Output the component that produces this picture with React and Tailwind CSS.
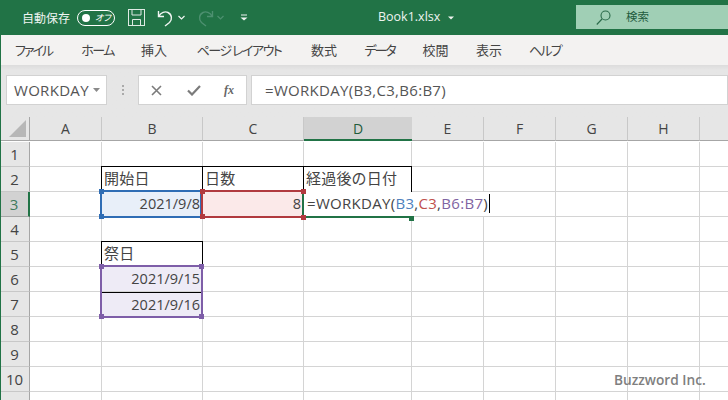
import React from "react";

const JP = "font-['Noto_Sans_CJK_JP','Noto_Sans',sans-serif]";
const LATIN = "font-['Open_Sans',sans-serif]";
const colWidths = [72, 101, 101, 108, 72, 72, 72, 72, 29];
const colNames = ["A", "B", "C", "D", "E", "F", "G", "H", ""];
const rows = [1, 2, 3, 4, 5, 6, 7, 8, 9, 10, 11];
const tabs = [
  { label: "ファイル", width: "w-[63px] tracking-[-2px]" },
  { label: "ホーム", width: "w-[65px] tracking-[-1.500px]" },
  { label: "挿入", width: "w-[48px]" },
  { label: "ページ レイアウト", width: "w-[122px] tracking-[-1.500px]" },
  { label: "数式", width: "w-[48px]" },
  { label: "データ", width: "w-[63px] tracking-[-2px]" },
  { label: "校閲", width: "w-[49px]" },
  { label: "表示", width: "w-[58px]" },
  { label: "ヘルプ", width: "w-[54px] tracking-[-1.700px]" },
];

const cells = {
  "2-1": { text: "開始日", box: true },
  "2-2": { text: "日数", box: true },
  "2-3": { text: "経過後の日付", box: true },
  "3-1": { text: "2021/9/8", right: true, bg: "bg-[#e8eff9]" },
  "3-2": { text: "8", right: true, bg: "bg-[#fbe9e9]" },
  "5-1": { text: "祭日", box: true },
  "6-1": { text: "2021/9/15", right: true, bg: "bg-[#eeebf6]" },
  "7-1": { text: "2021/9/16", right: true, bg: "bg-[#eeebf6]", top: true },
};

const Handle = ({ className }) => <div className={`absolute w-[5px] h-[5px] ${className}`} />;

const TitleBar = () => (
  <div className="h-[35px] bg-[#217346] flex items-center text-white shrink-0 whitespace-nowrap">
    <span className={`${JP} ml-[22px] w-[48px] shrink-0 text-[12px] text-[#f0f5f2]`}>自動保存</span>
    <div className="ml-[7px] w-[38px] h-[16px] shrink-0 rounded-full border border-white flex items-center">
      <div className="ml-[4px] w-[8px] h-[8px] rounded-full bg-white" />
      <span className={`${JP} ml-[5px] text-[9px] italic [font-feature-settings:'palt']`}>オフ</span>
    </div>
    <svg className="ml-[13px] shrink-0" width="17" height="17" viewBox="0 0 17 17" fill="none" stroke="#dfeae4" strokeWidth="1">
      <rect x="0.5" y="0.5" width="16" height="16" />
      <path d="M4 .5V6H13V.5M4.500 16.500V10.500H12.500V16.500" />
    </svg>
    <svg className="ml-[12px] shrink-0" width="18" height="18" viewBox="0 0 18 18" fill="none" stroke="#f0f5f2" strokeWidth="1.4">
      <path d="M1.500 2V7.500H7M2 7C4 3.500 8 2 11 3.500 15 5.500 15.500 10.500 12.500 13.500L8 17" />
    </svg>
    <svg className="ml-[3px] shrink-0" width="7" height="5" viewBox="0 0 7 5" fill="none" stroke="#f0f5f2" strokeWidth="1.2">
      <path d="M.5 1 3.500 4 6.500 1" />
    </svg>
    <svg className="ml-[11px] shrink-0" width="18" height="18" viewBox="0 0 18 18" fill="none" stroke="#4d9070" strokeWidth="1.4">
      <path d="M16.500 2V7.500H11M16 7C14 3.500 10 2 7 3.500 3 5.500 2.500 10.500 5.500 13.500L10 17" />
    </svg>
    <svg className="ml-[3px] shrink-0" width="7" height="5" viewBox="0 0 7 5" fill="none" stroke="#4d9070" strokeWidth="1.2">
      <path d="M.5 1 3.500 4 6.500 1" />
    </svg>
    <svg className="ml-[16px] shrink-0" width="8" height="7" viewBox="0 0 8 7" fill="none" stroke="#f0f5f2">
      <path d="M1 1H7" />
      <path d="M.5 3.500 4 6.500 7.500 3.500Z" fill="#f0f5f2" stroke="none" />
    </svg>
    <span className={`ml-[130px] w-[64px] shrink-0 ${LATIN} text-[12.500px] text-[#eef4f0]`}>Book1.xlsx</span>
    <svg className="ml-[6px] shrink-0" width="6" height="4" viewBox="0 0 6 4" fill="#eef4f0"><path d="M0 .5H6L3 3.500Z" /></svg>
    <div className="ml-[122px] w-[152px] h-[24px] -mt-[1px] shrink-0 bg-[#a0cfb5] flex items-center">
      <svg className="ml-[20px]" width="15" height="15" viewBox="0 0 15 15" fill="none" stroke="#2a6a4a" strokeWidth="1.1">
        <circle cx="9.500" cy="5.500" r="4.500" />
        <path d="M6 9 .8 14.500" />
      </svg>
      <span className={`${JP} ml-[15px] text-[11.500px] text-[#235c3f]`}>検索</span>
    </div>
  </div>
);

const RibbonTabs = () => (
  <div className="h-[30px] bg-[#f3f2f1] flex items-center pl-[2px] pb-[1px] shrink-0">
    {tabs.map((t) => (
      <div key={t.label} className={`${t.width} ${JP} shrink-0 text-center text-[13px] [font-feature-settings:'palt'] text-[#444] whitespace-nowrap`}>
        {t.label}
      </div>
    ))}
  </div>
);

const FormulaBar = () => (
  <div className="h-[52px] flex items-start pt-[10px] pl-[6px] shrink-0 bg-gradient-to-b from-[#dcdcdc] to-[#e6e6e6] to-[5px]">
    <div className="w-[101px] h-[30px] bg-white border border-[#d2d2d2] flex items-center pl-[7px] pr-[6px] justify-between">
      <span className={`${LATIN} text-[15px] tracking-[0.3px] text-[#555]`}>WORKDAY</span>
      <svg width="7" height="4" viewBox="0 0 7 4" fill="#8a8a8a"><path d="M0 0H7L3.500 4Z" /></svg>
    </div>
    <div className="w-[31px] h-[30px] flex flex-col items-center justify-center gap-[2px]">
      <div className="w-[2px] h-[2px] bg-[#aaa]" />
      <div className="w-[2px] h-[2px] bg-[#aaa]" />
      <div className="w-[2px] h-[2px] bg-[#aaa]" />
    </div>
    <div className="w-[109px] h-[30px] bg-white border border-[#d2d2d2] flex items-center">
      <svg className="ml-[12px]" width="11" height="11" viewBox="0 0 11 11" fill="none" stroke="#7b7b7b" strokeWidth="1.600">
        <path d="M1 1 10 10M10 1 1 10" />
      </svg>
      <svg className="ml-[25px]" width="14" height="11" viewBox="0 0 14 11" fill="none" stroke="#7b7b7b" strokeWidth="2.200">
        <path d="M1 5.500 5 9.500 13 1" />
      </svg>
      <span className="ml-[23px] font-['Liberation_Serif',serif] italic font-bold text-[12px] text-[#666]">fx</span>
    </div>
    <div className="ml-[4px] flex-1 h-[30px] bg-white border border-[#d2d2d2] flex items-center pl-[13px]">
      <span className={`${LATIN} text-[15px] tracking-[0.3px] text-[#555]`}>=WORKDAY(B3,C3,B6:B7)</span>
    </div>
  </div>
);

const Grid = () => (
  <div className="relative flex-1 overflow-hidden bg-white">
    <div className="grid grid-cols-[30px_72px_101px_101px_108px_72px_72px_72px_72px_29px] auto-rows-[25px]">
      <div className="h-[24px] bg-[#e6e6e6] border-b border-r border-[#a6a6a6] relative flex items-end justify-end">
        <div className="w-0 h-0 mr-[3px] mb-[3px] border-l-[17px] border-l-transparent border-b-[17px] border-b-[#b7b7b7]" />
      </div>
      {colNames.map((name, i) => (
        <div
          key={i}
          className={`h-[24px] ${LATIN} text-[14px] flex items-center justify-center ${
            name === "D"
              ? "bg-[#d2d2d2] border-b-2 border-[#217346] text-[#1f5c3c]"
              : "bg-[#e6e6e6] border-b border-r border-b-[#a6a6a6] border-r-[#c8c8c8] text-[#444]"
          }`}
        >
          {name}
        </div>
      ))}
      {rows.map((r) => (
        <React.Fragment key={r}>
          <div
            className={`${LATIN} text-[15px] flex items-center justify-center border-b ${
              r === 3
                ? "bg-[#d2d2d2] border-r-2 border-r-[#217346] border-b-[#a6a6a6] text-[#3f7a5c]"
                : "bg-[#e6e6e6] border-r border-r-[#a6a6a6] border-b-[#c8c8c8] text-[#444]"
            }`}
          >
            {r}
          </div>
          {colWidths.map((_, c) => {
            const cell = cells[`${r}-${c}`];
            if (!cell) return <div key={c} className="border-r border-b border-[#d4d4d4]" />;
            return (
              <div
                key={c}
                className={`flex items-center text-[#444] whitespace-nowrap ${
                  cell.right ? `justify-end pr-[2px] text-[14.500px] ${LATIN}` : `pl-[2px] pb-[3px] text-[15px] tracking-[0.2px] ${JP}`
                } ${cell.bg || ""} ${
                  cell.box ? "border border-black -mt-px -ml-px -mb-px" : "border-r border-b border-[#d4d4d4]"
                } ${cell.top ? "border-t border-t-black" : ""}`}
              >
                {cell.text}
              </div>
            );
          })}
        </React.Fragment>
      ))}
    </div>

    {/* range highlights drawn over the sheet */}
    <div className="absolute left-[100px] top-[73px] w-[102px] h-[28px] border-[2px] border-[#2f6db5]">
      <Handle className="-left-[3px] -top-[3px] bg-[#2f6db5]" />
      <Handle className="-left-[3px] -bottom-[3px] bg-[#2f6db5]" />
    </div>
    <div className="absolute left-[304px] top-[75px] h-[24px] bg-white flex items-center pl-[3px] pb-[2px] text-[15px] tracking-[0.3px] whitespace-nowrap text-[#444]">
      <span className={LATIN}>=WORKDAY(</span>
      <span className={`${LATIN} text-[#4f81bd]`}>B3</span>
      <span className={LATIN}>,</span>
      <span className={`${LATIN} text-[#c0504d]`}>C3</span>
      <span className={LATIN}>,</span>
      <span className={`${LATIN} text-[#8064a2]`}>B6:B7</span>
      <span className={LATIN}>)</span>
      <span className="ml-[1px] w-px h-[19px] bg-black" />
    </div>
    <div className="absolute left-[201px] top-[73px] w-[103px] h-[28px] border-[2px] border-[#b13a3f]">
      <Handle className="-left-[3px] -top-[3px] bg-[#b13a3f]" />
      <Handle className="-left-[3px] -bottom-[3px] bg-[#b13a3f]" />
    </div>
    <div className="absolute left-[100px] top-[148px] w-[103px] h-[53px] border-[2px] border-[#7e5ea8]">
      <Handle className="-left-[3px] -top-[3px] bg-[#7e5ea8]" />
      <Handle className="-right-[3px] -top-[3px] bg-[#7e5ea8]" />
      <Handle className="-left-[3px] -bottom-[3px] bg-[#7e5ea8]" />
      <Handle className="-right-[3px] -bottom-[3px] bg-[#7e5ea8]" />
    </div>
    <div className="absolute left-[302px] top-[73px] w-[2px] h-[28px] bg-[#217346]" />
    <div className="absolute left-[302px] top-[99px] w-[109px] h-[2px] bg-[#217346]" />
    <Handle className="left-[301px] top-[72px] bg-[#b13a3f]" />
    <Handle className="left-[301px] top-[98px] bg-[#b13a3f]" />
    <Handle className="left-[409px] top-[99px] bg-[#217346]" />

    <div className={`absolute left-[614px] top-[253px] ${LATIN} font-semibold text-[13.700px] text-[#7f7f7f]`}>
      Buzzword Inc.
    </div>
  </div>
);

export default function App() {
  return (
    <div className="w-[728px] h-[400px] overflow-hidden flex flex-col relative bg-white">
      <TitleBar />
      <RibbonTabs />
      <FormulaBar />
      <Grid />
      <div className="absolute left-0 top-[35px] bottom-0 w-[1px] bg-[#217346]" />
    </div>
  );
}
